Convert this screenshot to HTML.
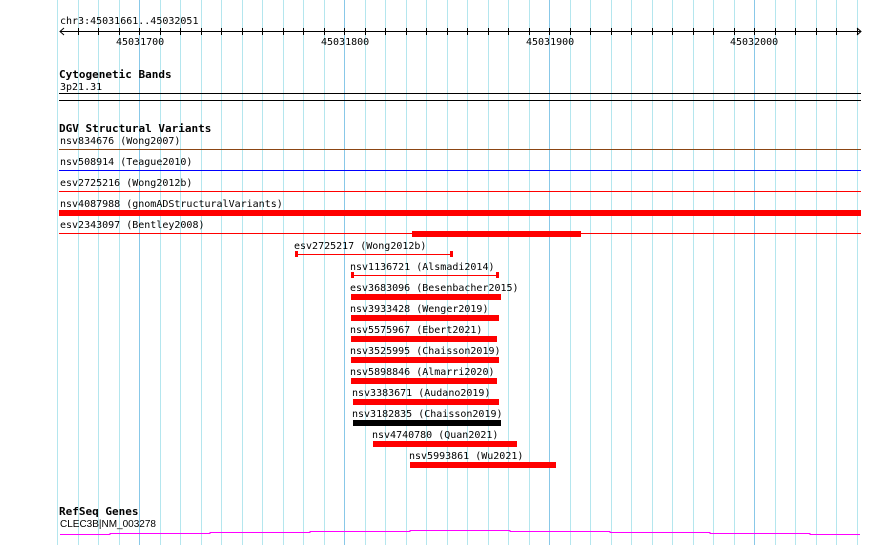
<!DOCTYPE html>
<html><head><meta charset="utf-8"><style>
html,body{margin:0;padding:0;background:#fff;width:890px;height:545px;overflow:hidden}
svg text{font-family:"DejaVu Sans Mono","Liberation Mono",monospace;font-size:10px;fill:#000}
.b{font-weight:bold;font-size:11px;font-family:"DejaVu Sans Mono",monospace}
</style></head><body>
<svg width="890" height="545" xmlns="http://www.w3.org/2000/svg">
<path stroke="#b4e6ee" stroke-width="1" fill="none" d="M57.5 0V545M78.5 0V545M98.5 0V545M119.5 0V545M160.5 0V545M180.5 0V545M201.5 0V545M221.5 0V545M242.5 0V545M262.5 0V545M283.5 0V545M303.5 0V545M324.5 0V545M365.5 0V545M385.5 0V545M406.5 0V545M426.5 0V545M447.5 0V545M467.5 0V545M488.5 0V545M508.5 0V545M529.5 0V545M570.5 0V545M590.5 0V545M611.5 0V545M631.5 0V545M652.5 0V545M672.5 0V545M693.5 0V545M713.5 0V545M734.5 0V545M775.5 0V545M795.5 0V545M816.5 0V545M836.5 0V545M857.5 0V545"/>
<path stroke="#88c8e8" stroke-width="1" fill="none" d="M139.5 0V545M344.5 0V545M549.5 0V545M754.5 0V545"/>
<path stroke="#000" stroke-width="1" fill="none" d="M78.5 28V35M98.5 28V35M119.5 28V35M139.5 28V35M160.5 28V35M180.5 28V35M201.5 28V35M221.5 28V35M242.5 28V35M262.5 28V35M283.5 28V35M303.5 28V35M324.5 28V35M344.5 28V35M365.5 28V35M385.5 28V35M406.5 28V35M426.5 28V35M447.5 28V35M467.5 28V35M488.5 28V35M508.5 28V35M529.5 28V35M549.5 28V35M570.5 28V35M590.5 28V35M611.5 28V35M631.5 28V35M652.5 28V35M672.5 28V35M693.5 28V35M713.5 28V35M734.5 28V35M754.5 28V35M775.5 28V35M795.5 28V35M816.5 28V35M836.5 28V35M857.5 28V35"/>
<line x1="60" y1="31.5" x2="861" y2="31.5" stroke="#000"/>
<polyline points="64,28 60,31.5 64,35" fill="none" stroke="#000"/>
<polyline points="857,28 861,31.5 857,35" fill="none" stroke="#000"/>
<text x="60" y="24">chr3:45031661..45032051</text>
<text x="116" y="45">45031700</text>
<text x="321" y="45">45031800</text>
<text x="526" y="45">45031900</text>
<text x="730" y="45">45032000</text>

<text x="59" y="78" class="b">Cytogenetic Bands</text>
<text x="60" y="90">3p21.31</text>
<rect x="59" y="93" width="802" height="1" fill="#000"/>
<rect x="59" y="100" width="802" height="1" fill="#000"/>

<text x="59" y="132" class="b">DGV Structural Variants</text>
<text x="60" y="144">nsv834676 (Wong2007)</text>
<rect x="59" y="149" width="802" height="1" fill="#8b4513"/>
<text x="60" y="165">nsv508914 (Teague2010)</text>
<rect x="59" y="170" width="802" height="1" fill="#0000ff"/>
<text x="60" y="186">esv2725216 (Wong2012b)</text>
<rect x="59" y="191" width="802" height="1" fill="#ff0000"/>
<text x="60" y="207">nsv4087988 (gnomADStructuralVariants)</text>
<rect x="59" y="210" width="802" height="6" fill="#ff0000"/>
<text x="60" y="228">esv2343097 (Bentley2008)</text>
<rect x="59" y="233" width="802" height="1" fill="#ff0000"/>
<rect x="412" y="231" width="169" height="6" fill="#ff0000"/>

<text x="294" y="249">esv2725217 (Wong2012b)</text>
<rect x="296" y="254" width="156" height="1" fill="#ff0000"/>
<rect x="295" y="251" width="3" height="6" fill="#ff0000"/>
<rect x="450" y="251" width="3" height="6" fill="#ff0000"/>
<text x="350" y="270">nsv1136721 (Alsmadi2014)</text>
<rect x="351" y="275" width="147" height="1" fill="#ff0000"/>
<rect x="351" y="272" width="3" height="6" fill="#ff0000"/>
<rect x="496" y="272" width="3" height="6" fill="#ff0000"/>
<text x="350" y="291">esv3683096 (Besenbacher2015)</text>
<rect x="351" y="294" width="150" height="6" fill="#ff0000"/>
<text x="350" y="312">nsv3933428 (Wenger2019)</text>
<rect x="351" y="315" width="148" height="6" fill="#ff0000"/>
<text x="350" y="333">nsv5575967 (Ebert2021)</text>
<rect x="351" y="336" width="146" height="6" fill="#ff0000"/>
<text x="350" y="354">nsv3525995 (Chaisson2019)</text>
<rect x="351" y="357" width="148" height="6" fill="#ff0000"/>
<text x="350" y="375">nsv5898846 (Almarri2020)</text>
<rect x="351" y="378" width="146" height="6" fill="#ff0000"/>
<text x="352" y="396">nsv3383671 (Audano2019)</text>
<rect x="353" y="399" width="146" height="6" fill="#ff0000"/>
<text x="352" y="417">nsv3182835 (Chaisson2019)</text>
<rect x="353" y="420" width="148" height="6" fill="#000"/>
<text x="372" y="438">nsv4740780 (Quan2021)</text>
<rect x="373" y="441" width="144" height="6" fill="#ff0000"/>
<text x="409" y="459">nsv5993861 (Wu2021)</text>
<rect x="410" y="462" width="146" height="6" fill="#ff0000"/>

<text x="59" y="515" class="b">RefSeq Genes</text>
<text x="60" y="527" style="font-family:'Liberation Sans Narrow','Liberation Sans',sans-serif;font-size:10px">CLEC3B|NM_003278</text>
<polyline fill="none" stroke="#ff00ff" points="60,534.5 110,534.5 110,533.5 210,533.5 210,532.5 310,532.5 310,531.5 410,531.5 410,530.5 510,530.5 510,531.5 610,531.5 610,532.5 710,532.5 710,533.5 810,533.5 810,534.5 860,534.5"/>
</svg>
</body></html>
